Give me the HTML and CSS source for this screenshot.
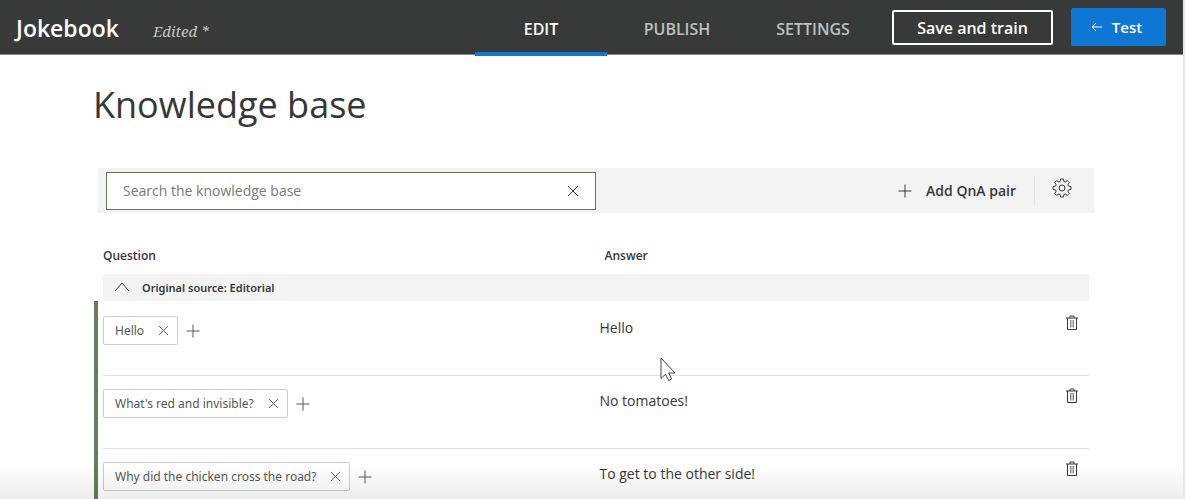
FILE: index.html
```html
<!DOCTYPE html>
<html lang="en">
<head>
<meta charset="utf-8">
<meta name="viewport" content="width=device-width, initial-scale=1">
<title>Jokebook - Knowledge base</title>
<link rel="stylesheet" href="styles.css">
</head>
<body>
<svg class="sprite" aria-hidden="true">
  <symbol id="close" viewBox="0 0 12 12"><path d="M1 1l10 10M11 1L1 11"/></symbol>
  <symbol id="plus" viewBox="0 0 14 14"><path d="M7 .5v13M.5 7h13"/></symbol>
  <symbol id="trash" viewBox="0 0 12 16"><path d="M0 3h12M4 3V1h4v2M1.500 3v11.500h9V3"/><path stroke="#8b8e8a" d="M4.500 5v7.500M6 5v7.500M7.500 5v7.500"/></symbol>
</svg>
<header class="topbar">
  <span class="brand">Jokebook</span>
  <span class="status">Edited *</span>
  <nav class="tabs">
    <a class="tab tab-active" href="#edit" aria-current="page">EDIT</a>
    <a class="tab" href="#publish">PUBLISH</a>
    <a class="tab" href="#settings">SETTINGS</a>
  </nav>
  <button class="save" type="button">Save and train</button>
  <button class="test" type="button"><svg class="arrow" viewBox="0 0 12 10" aria-hidden="true"><path d="M11 5H1M5 1L1 5l4 4"/></svg>Test</button>
</header>
<main class="page">
  <h1 class="title">Knowledge base</h1>
  <div class="toolbar">
    <div class="search">
      <input class="search-input" type="text" aria-label="Search the knowledge base" placeholder="Search the knowledge base">
      <button class="icon-button" type="button" aria-label="Clear search"><svg class="icon-clear"><use href="#close"/></svg></button>
    </div>
    <button class="add" type="button"><svg class="icon-add" aria-hidden="true"><use href="#plus"/></svg>Add QnA pair</button>
    <button class="gear" type="button" aria-label="View options">
      <svg class="icon-gear" viewBox="0 0 20 20"><path d="M8.600 1h2.800l.5 2.500 1.300.5 2.100-1.400 2 2-1.400 2.100.6 1.400 2.500.5v2.800l-2.500.5-.6 1.300 1.400 2.200-2 2-2.100-1.400-1.300.5-.5 2.500H8.600l-.5-2.500-1.300-.5-2.100 1.400-2-2 1.400-2.200-.6-1.300L1 11.400V8.600l2.500-.5.6-1.400-1.400-2.100 2-2L6.800 4l1.300-.5z"/><circle cx="10" cy="10" r="3"/></svg>
    </button>
  </div>
  <table class="pairs">
    <colgroup><col class="col-bar"><col class="col-question"><col class="col-answer"><col class="col-delete"></colgroup>
    <thead>
      <tr><td></td><th scope="col">Question</th><th class="head-answer" scope="col">Answer</th><td></td></tr>
    </thead>
    <tbody>
      <tr><td></td><th class="group" colspan="3" scope="rowgroup"><button class="group-toggle" type="button" aria-expanded="true"><svg class="chevron" viewBox="0 0 16 10" aria-hidden="true"><path d="M1 9l7-8 7 8"/></svg>Original source: Editorial</button></th></tr>
      <tr class="pair pair-first">
        <td class="bar"></td>
        <td><div class="questions"><span class="chip">Hello<button class="icon-button" type="button" aria-label="Remove question"><svg class="icon-remove"><use href="#close"/></svg></button></span><button class="icon-button" type="button" aria-label="Add alternative"><svg class="icon-more"><use href="#plus"/></svg></button></div></td>
        <td class="answer">Hello</td>
        <td class="delete"><button class="icon-button" type="button" aria-label="Delete pair"><svg class="icon-trash"><use href="#trash"/></svg></button></td>
      </tr>
      <tr class="pair">
        <td class="bar"></td>
        <td><div class="questions"><span class="chip">What's red and invisible?<button class="icon-button" type="button" aria-label="Remove question"><svg class="icon-remove"><use href="#close"/></svg></button></span><button class="icon-button" type="button" aria-label="Add alternative"><svg class="icon-more"><use href="#plus"/></svg></button></div></td>
        <td class="answer">No tomatoes!</td>
        <td class="delete"><button class="icon-button" type="button" aria-label="Delete pair"><svg class="icon-trash"><use href="#trash"/></svg></button></td>
      </tr>
      <tr class="pair">
        <td class="bar"></td>
        <td><div class="questions"><span class="chip">Why did the chicken cross the road?<button class="icon-button" type="button" aria-label="Remove question"><svg class="icon-remove"><use href="#close"/></svg></button></span><button class="icon-button" type="button" aria-label="Add alternative"><svg class="icon-more"><use href="#plus"/></svg></button></div></td>
        <td class="answer">To get to the other side!</td>
        <td class="delete"><button class="icon-button" type="button" aria-label="Delete pair"><svg class="icon-trash"><use href="#trash"/></svg></button></td>
      </tr>
    </tbody>
  </table>
</main>
<div class="fade"></div>
<svg class="pointer" viewBox="0 0 16 25" aria-hidden="true"><path d="M1 1v20.500l4.500-4.300 3.200 6.300 3-1.500-3-6H15z"/></svg>
</body>
</html>
```

FILE: styles.css
```css
* { box-sizing: border-box; }

body {
  margin: 0;
  height: 100vh;
  overflow: hidden;
  position: relative;
  border-right: 2px solid #e6e7e8;
  background: #fff;
  color: #363837;
  font-family: "Open Sans", "Noto Sans", sans-serif;
  font-size: 14px;
}

button {
  margin: 0;
  padding: 0;
  border: 0;
  background: none;
  color: inherit;
  font: inherit;
}

svg { display: block; fill: none; stroke: currentColor; }
.sprite { position: absolute; width: 0; height: 0; }
.icon-button { display: flex; }

/* Top bar */
.topbar {
  display: flex;
  align-items: center;
  height: 55px;
  margin-right: -2px;
  padding: 0 19px 0 16px;
  border-bottom: 1px solid #858685;
  background: #383a39;
  color: #fff;
}
.brand { font-size: 23px; font-weight: 600; line-height: 32px; padding-top: 2px; }
.status {
  margin-left: 34px;
  padding-top: 8px;
  color: #c3c9bd;
  font: italic 15px/20px "Noto Serif", "DejaVu Serif", "Liberation Serif", serif;
}
.tabs { display: flex; gap: 4px; align-self: stretch; margin: 0 13px -2px auto; }
.tab {
  min-width: 132px;
  padding: 17px 28px 0;
  border-bottom: 4px solid transparent;
  color: #bcc1b9;
  font-size: 16px;
  font-weight: 600;
  line-height: 24px;
  text-align: center;
  text-decoration: none;
}
.tab-active { border-color: #0e76d3; color: #fff; }
.save {
  width: 161px;
  height: 35px;
  padding-top: 2px;
  border: 2px solid #fff;
  border-radius: 2px;
  font-size: 16px;
  font-weight: 600;
}
.test {
  display: flex;
  align-items: center;
  justify-content: center;
  gap: 9px;
  width: 95px;
  height: 38px;
  margin-left: 18px;
  padding-right: 4px;
  border-radius: 2px;
  background: #0e76d3;
  font-size: 15px;
  font-weight: 600;
}
.arrow { width: 12px; height: 10px; }

/* Page */
.page { padding: 24px 89px 0 93px; }
.title { margin: 0; font-size: 36px; font-weight: 400; line-height: 52px; }

.toolbar {
  display: flex;
  align-items: center;
  height: 45px;
  margin: 37px 0 0 5px;
  padding-left: 8px;
  background: #f3f3f3;
}
.search {
  display: flex;
  align-items: center;
  width: 490px;
  height: 38px;
  padding: 0 16px;
  border: 1px solid #65755a;
  background: #fff;
}
.search-input {
  flex: 1;
  min-width: 0;
  padding: 0;
  border: 0;
  outline: 0;
  background: none;
  color: inherit;
  font: inherit;
}
.search-input::placeholder { color: #777a76; opacity: 1; }
.icon-clear { width: 12px; height: 12px; }
.add { display: flex; align-items: center; gap: 14px; margin-left: auto; font-weight: 600; }
.icon-add { width: 14px; height: 14px; }
.gear {
  display: flex;
  justify-content: center;
  margin-left: 18px;
  width: 60px;
  height: 30px;
  padding: 2px 5px 0 0;
  border-left: 1px solid #e5e5e5;
}
.icon-gear { width: 20px; height: 20px; }

/* Question and answer table */
.pairs {
  width: calc(100% - 6px);
  margin: 29px 5px 0 1px;
  border-spacing: 0;
  table-layout: fixed;
}
.col-bar { width: 9px; }
.col-question { width: 49.8%; }
.col-delete { width: 36px; }
.pairs td, .pairs th { padding: 0; text-align: left; vertical-align: top; }
.pairs thead th { height: 32px; font-size: 12px; font-weight: 600; line-height: 28px; }
.pairs thead .head-answer { padding-left: 6px; }
.pairs .group { height: 27px; background: #f3f3f3; }
.group-toggle {
  display: flex;
  align-items: center;
  gap: 12px;
  height: 26px;
  padding-left: 11px;
  font-family: "Noto Sans", "Open Sans", sans-serif;
  font-size: 11px;
  font-weight: 600;
}
.chevron { width: 16px; height: 10px; }

.pairs .pair td { height: 73px; border-bottom: 1px solid #dfe2e2; vertical-align: bottom; }
.pairs .pair-first td { height: 75px; }
.pairs .pair .bar { border-bottom: 0; border-left: 4px solid #6b7a5e; }
.questions { display: flex; align-items: center; gap: 8px; padding-bottom: 30px; color: #555b50; }
.chip {
  display: flex;
  align-items: center;
  gap: 14px;
  height: 29px;
  padding: 0 8px 0 11px;
  border: 1px solid #c9cfcf;
  border-radius: 2px;
  background: #fff;
  font-family: "Noto Sans", "Open Sans", sans-serif;
  font-size: 12px;
}
.icon-remove { width: 11px; height: 11px; }
.icon-more { width: 14px; height: 14px; }
.pairs .pair .answer { padding: 0 0 36px 1px; line-height: 22px; }
.pairs .pair .delete { padding: 0 0 44px 13px; }
.icon-trash { width: 12px; height: 16px; }

/* Overlays */
.fade {
  position: absolute;
  right: 0;
  bottom: 0;
  left: 0;
  height: 34px;
  background: linear-gradient(transparent, rgb(0 0 0 / 7%));
  pointer-events: none;
}
.pointer {
  position: absolute;
  top: 357px;
  left: 660px;
  width: 16px;
  height: 25px;
  fill: #fff;
  stroke: #444;
  pointer-events: none;
}
```
